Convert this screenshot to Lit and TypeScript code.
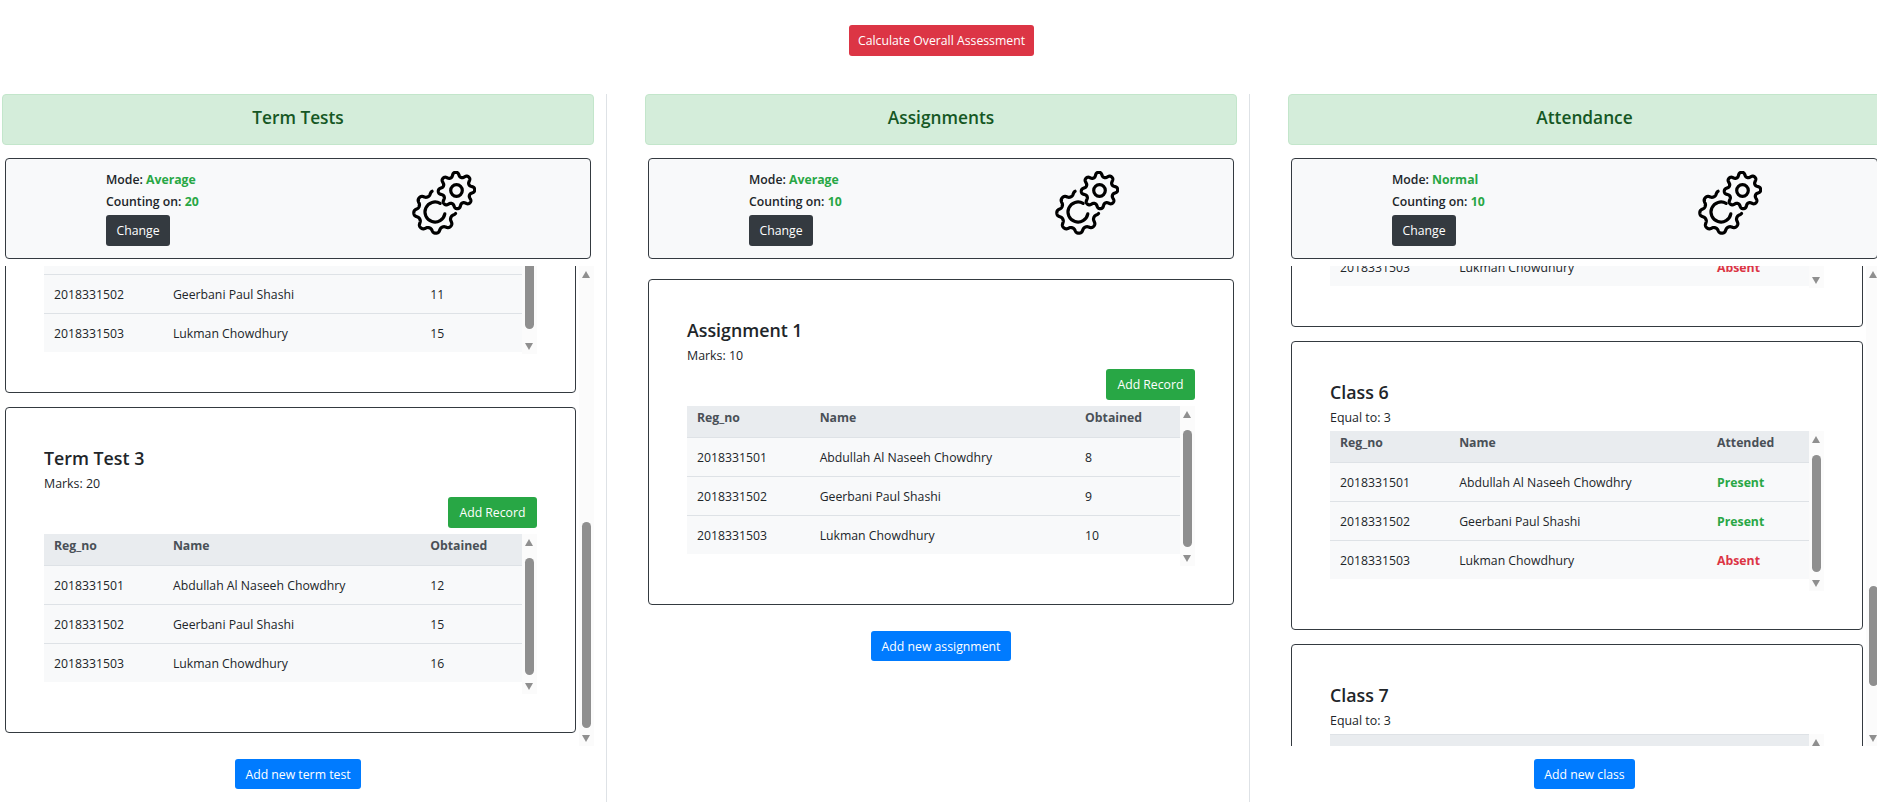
import { LitElement, html, css, svg } from "lit";
import { customElement } from "lit/decorators.js";

type Row = { reg: string; name: string; value: string; tone?: string };
type Card = { title: string; note: string; rows: Row[]; scrolled: boolean };
type Column = {
  heading: string; mode: string; counting: string; valueHead: string; withRecord: boolean;
  cards: Card[]; addLabel: string; scrollTop: number; thumb?: { top: number; size: number };
};

const people = ["Abdullah Al Naseeh Chowdhry", "Geerbani Paul Shashi", "Lukman Chowdhury"];
const regs = ["2018331501", "2018331502", "2018331503"];
const marks = (a: string[]): Row[] => a.map((v, i) => ({ reg: regs[i], name: people[i], value: v }));
const attendance = (a: string[]): Row[] =>
  a.map((v, i) => ({ reg: regs[i], name: people[i], value: v, tone: v === "Present" ? "good" : "bad" }));

const columns: Column[] = [
  {
    heading: "Term Tests", mode: "Average", counting: "20", valueHead: "Obtained", withRecord: true,
    addLabel: "Add new term test", scrollTop: 552, thumb: { top: 256, size: 206 },
    cards: [
      { title: "Term Test 1", note: "Marks: 20", rows: marks(["14", "13", "17"]), scrolled: false },
      { title: "Term Test 2", note: "Marks: 20", rows: marks(["10", "11", "15"]), scrolled: false },
      { title: "Term Test 3", note: "Marks: 20", rows: marks(["12", "15", "16"]), scrolled: true },
    ],
  },
  {
    heading: "Assignments", mode: "Average", counting: "10", valueHead: "Obtained", withRecord: true,
    addLabel: "Add new assignment", scrollTop: 0,
    cards: [{ title: "Assignment 1", note: "Marks: 10", rows: marks(["8", "9", "10"]), scrolled: true }],
  },
  {
    heading: "Attendance", mode: "Normal", counting: "10", valueHead: "Attended", withRecord: false,
    addLabel: "Add new class", scrollTop: 1453, thumb: { top: 320, size: 100 },
    cards: [1, 2, 3, 4, 5, 6, 7].map((n) => ({
      title: `Class ${n}`, note: "Equal to: 3",
      rows: attendance(["Present", "Present", "Absent"]), scrolled: n === 6,
    })),
  },
];

function gearPath(cx: number, cy: number, mean: number, amp: number, from: number, to: number): string {
  const pts: string[] = [];
  const steps = Math.round(Math.abs(to - from) * 1.5);
  for (let i = 0; i <= steps; i++) {
    const deg = from + ((to - from) * i) / steps;
    const t = (deg * Math.PI) / 180;
    const r = mean + amp * Math.tanh(1.3 * Math.cos(8 * t + 0.4)) / Math.tanh(1.3);
    pts.push(`${(cx + r * Math.cos(t)).toFixed(2)} ${(cy + r * Math.sin(t)).toFixed(2)}`);
  }
  return "M" + pts.join("L");
}

function arcPath(cx: number, cy: number, r: number, from: number, to: number): string {
  const p = (d: number) => {
    const t = (d * Math.PI) / 180;
    return `${(cx + r * Math.cos(t)).toFixed(2)} ${(cy + r * Math.sin(t)).toFixed(2)}`;
  };
  return `M${p(from)}A${r} ${r} 0 1 1 ${p(to)}`;
}

const gears = html`<svg class="gears" width="64" height="64" viewBox="0 0 64 64" fill="none" stroke="#000"
  stroke-width="3.2" stroke-linecap="round" stroke-linejoin="round">
  ${svg`<path d=${gearPath(44.5, 19.5, 16, 2.2, 0, 360)}></path>
  <circle cx="44.5" cy="19.5" r="5.8"></circle>
  <path d=${gearPath(23, 41, 19, 2.2, 4, 262)}></path>
  <path d=${arcPath(23, 41, 10, 11, 301)}></path>`}
</svg>`;

@customElement("app-root")
export class AppRoot extends LitElement {
  static styles = css`
    :host {
      display: block; width: 100vw; height: 807px; overflow: hidden; background: #fff;
      font-family: "Open Sans", "Noto Sans", sans-serif; font-size: 12.25px; line-height: 21px; color: #212529;
    }
    * { box-sizing: border-box; }
    .top { display: flex; justify-content: center; padding: 25px 0 0 6px; }
    .btn {
      display: inline-block; height: 31px; border: 0; border-radius: 3px; padding: 1px 10.5px 0; color: #fff;
      font: inherit; line-height: 30px; white-space: nowrap;
    }
    .danger { background: #dc3545; padding: 1px 9px 0; }
    .dark { background: #343a40; }
    .success { background: #28a745; padding: 1px 11px 0; }
    .primary { background: #007bff; }
    .grid { display: grid; grid-template-columns: 607px 643px 643px; margin-top: 38px; width: 1893px; }
    .col { height: 708px; padding: 0 12px 0 38px; border-right: 1px solid #dee2e6; display: flex; flex-direction: column; }
    .col:first-child { padding-left: 2px; }
    .col:last-child { border-right: 0; }
    .heading {
      height: 51px; flex: none; text-align: center; background: #d4edda; border: 1px solid #c3e6cb; border-radius: 4px;
      color: #155724; font-size: 17.3px; font-weight: 600; line-height: 24px; padding-top: 11px;
    }
    .settings {
      flex: none; height: 101px; margin: 13px 3.5px 7px 3px; background: #f8f9fa; border: 1px solid #343a40; border-radius: 4px;
      padding: 10px 0 0 100px; display: grid; grid-template-columns: 306px auto; font-size: 12.25px; font-weight: 600; line-height: 22px;
    }
    .settings .btn { margin-top: 2px; font-weight: 400; }
    .settings b { color: #28a745; font-weight: 700; }
    .gears { margin-top: 2px; }
    .body { display: flex; max-height: 480px; flex: none; }
    .scroller { flex: 1; min-width: 0; overflow: hidden; padding: 13px 3.5px 13px 3px; display: flex; flex-direction: column; gap: 14px; }
    .card { flex: none; background: #fff; border: 1px solid #343a40; border-radius: 4px; padding: 38px; }
    h4 { margin: 0; font-size: 17.8px; font-weight: 600; line-height: 24px; }
    .note { margin-top: 3px; font-size: 12.4px; font-weight: 500; line-height: 21px; }
    .actions { display: flex; justify-content: flex-end; margin: 3px 0 6px; }
    .tbl { display: flex; height: 160px; margin-top: 3px; }
    .actions + .tbl { margin-top: 0; }
    .tscroll { flex: 1; min-width: 0; overflow: hidden; padding-bottom: 12px; }
    table { width: 100%; table-layout: fixed; border-spacing: 0; }
    th { background: #e9ecef; color: #495057; font-weight: 700; text-align: left; border-top: 1px solid #dee2e6; padding: 10px 10px 9px; }
    td { background: #f8f9fa; border-top: 1px solid #dee2e6; padding: 9px 10px 8px; white-space: nowrap; }
    .good { color: #28a745; font-weight: 700; }
    .bad { color: #dc3545; font-weight: 700; }
    .bar { flex: none; width: 15px; background: #fbfbfb; display: flex; flex-direction: column; align-items: center; }
    .arrow { flex: none; height: 18px; width: 15px; position: relative; }
    .arrow::after {
      content: ""; position: absolute; left: 3px; border-left: 4.5px solid transparent; border-right: 4.5px solid transparent;
    }
    .up::after { top: 5px; border-bottom: 7px solid #8f8f8f; }
    .down::after { bottom: 4px; border-top: 7px solid #8f8f8f; }
    .run { flex: 1; min-height: 0; width: 9px; }
    .thumb { width: 9px; background: #8f8f8f; border-radius: 5px; }
    .add { display: flex; justify-content: center; margin-top: 13px; flex: none; }
    .add .btn { height: 30px; }
  `;

  firstUpdated() {
    const root = this.renderRoot as ShadowRoot;
    root.querySelectorAll<HTMLElement>(".scroller").forEach((el, i) => (el.scrollTop = columns[i].scrollTop));
    root.querySelectorAll<HTMLElement>(".tscroll.scrolled").forEach((el) => (el.scrollTop = 10));
  }

  private bar(top: number, size: number) {
    // `top` is measured from the bar's top edge; the arrow zone takes 18px of it.
    const offset = top - 18;
    return html`<div class="bar">
      <div class="arrow up"></div>
      <div class="run"><div class="thumb" style="margin-top:${offset}px;height:${size}px"></div></div>
      <div class="arrow down"></div>
    </div>`;
  }

  private card(c: Card, col: Column) {
    return html`<section class="card">
      <h4>${c.title}</h4>
      <div class="note">${c.note}</div>
      ${col.withRecord ? html`<div class="actions"><span class="btn success">Add Record</span></div>` : ""}
      <div class="tbl">
        <div class="tscroll ${c.scrolled ? "scrolled" : ""}">
          <table>
            <colgroup><col style="width:24.9%" /><col style="width:53.9%" /><col style="width:21.2%" /></colgroup>
            <thead><tr><th>Reg_no</th><th>Name</th><th>${col.valueHead}</th></tr></thead>
            <tbody>
              ${c.rows.map((r) => html`<tr><td>${r.reg}</td><td>${r.name}</td><td class=${r.tone ?? ""}>${r.value}</td></tr>`)}
            </tbody>
          </table>
        </div>
        ${this.bar(c.scrolled ? 24 : 18, 117)}
      </div>
    </section>`;
  }

  render() {
    return html`
      <div class="top"><button class="btn danger">Calculate Overall Assessment</button></div>
      <div class="grid">
        ${columns.map((col) => html`<div class="col">
          <div class="heading">${col.heading}</div>
          <div class="settings">
            <div>
              <div>Mode: <b>${col.mode}</b></div>
              <div>Counting on: <b>${col.counting}</b></div>
              <button class="btn dark">Change</button>
            </div>
            ${gears}
          </div>
          <div class="body">
            <div class="scroller">${col.cards.map((c) => this.card(c, col))}</div>
            ${col.thumb ? this.bar(col.thumb.top, col.thumb.size) : ""}
          </div>
          <div class="add"><button class="btn primary">${col.addLabel}</button></div>
        </div>`)}
      </div>
    `;
  }
}
